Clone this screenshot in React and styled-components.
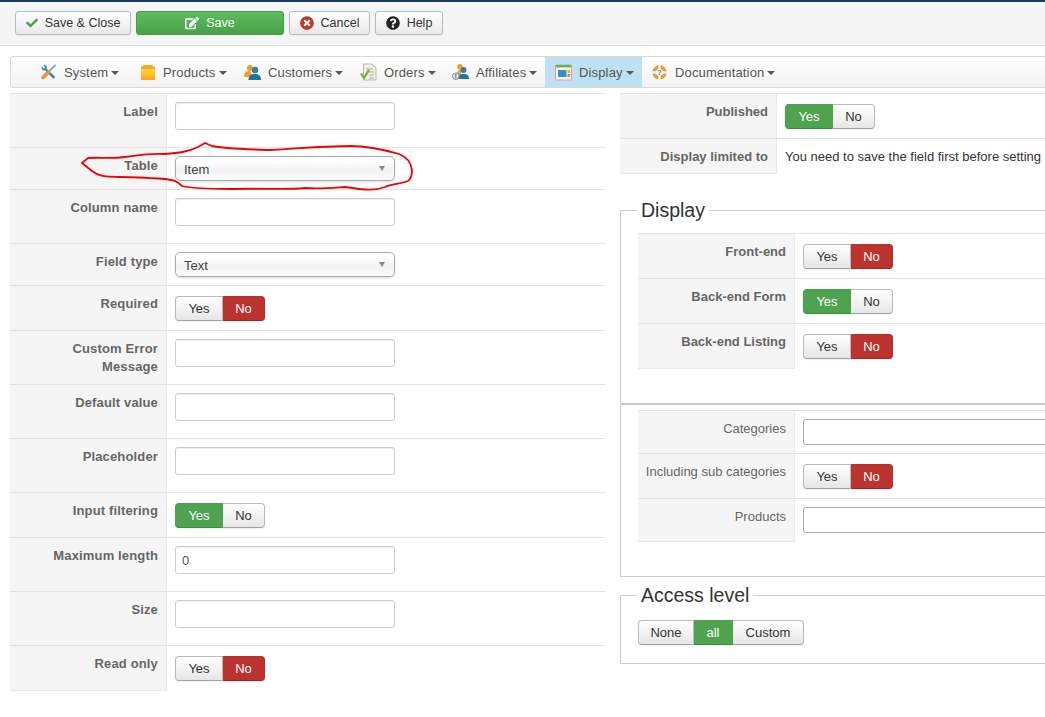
import React from "react";
import styled, { createGlobalStyle, css } from "styled-components";
import { FaCheck, FaEdit, FaTimesCircle, FaQuestionCircle } from "react-icons/fa";

const GlobalStyle = createGlobalStyle`
  html, body {
    margin: 0;
    padding: 0;
    background: #fff;
    overflow: hidden;
  }
  * { box-sizing: border-box; }
`;

const ToolsIcon = () => (
  <svg width="18" height="18" viewBox="0 0 18 18">
    <path d="M2 3.5 L4 5.5 L5.5 4 L3.5 2 C6 0.8 8 3 7 5.5 L15.5 13.5 C16.5 14.8 15 16.5 13.6 15.5 L5.3 7.2 C3 8 0.8 6 2 3.5 Z" fill="#2f87b4" />
    <path d="M16.5 1.5 L9.5 8.5" stroke="#9aa7ad" strokeWidth="2" />
    <path d="M8.5 9.5 L3.2 14.8" stroke="#ec9433" strokeWidth="4" strokeLinecap="round" />
  </svg>
);

const BoxIcon = () => (
  <svg width="16" height="17" viewBox="0 0 16 17">
    <defs>
      <linearGradient id="box" x1="0" y1="0" x2="0" y2="1">
        <stop offset="0" stopColor="#ffd23f" />
        <stop offset="1" stopColor="#fba81c" />
      </linearGradient>
    </defs>
    <path d="M1 3 L4 1 H11 L15 3 V5 H1 Z" fill="#f6a823" />
    <rect x="1" y="5" width="14" height="11" fill="url(#box)" />
  </svg>
);

const UsersIcon = () => (
  <svg width="17" height="17" viewBox="0 0 17 17">
    <circle cx="6" cy="4" r="3" fill="#f59b2b" />
    <path d="M0 12 C0 8 3 7 6 7 L8 11 L6 13 H1 Z" fill="#f59b2b" />
    <circle cx="11" cy="6" r="3.2" fill="#2b7fa8" />
    <path d="M4.5 16 C4.5 11.5 7.5 10 11 10 C14.5 10 17 11.5 17 16 Z" fill="#22729b" />
  </svg>
);

const OrdersIcon = () => (
  <svg width="17" height="18" viewBox="0 0 17 18">
    <path d="M3.5 1 H12 L16 5 V17 H3.5 Z" fill="#f1f1ec" stroke="#b9b9b0" />
    <path d="M6 6 H13 M6 9 H14 M9 12 H14 M9 15 H14" stroke="#a9aea8" />
    <path d="M1 10.5 L4 15 L9 7" fill="none" stroke="#7eb02c" strokeWidth="2.2" />
  </svg>
);

const AffiliatesIcon = () => (
  <svg width="17" height="18" viewBox="0 0 17 18">
    <circle cx="8" cy="3.8" r="2.8" fill="#f5a02e" />
    <path d="M5 13 C4.5 8 6 7 9 7 L9 13 Z" fill="#f5a02e" />
    <circle cx="11.5" cy="7" r="3" fill="#2b7fa8" />
    <path d="M6 16 C6 12 8 11 11.5 11 C15 11 17 12 17 16 Z" fill="#22729b" />
    <circle cx="3.8" cy="13.2" r="3.3" fill="#dfe8ef" stroke="#6c8fb0" />
    <path d="M3.8 11 V15.5" stroke="#4b6f94" />
  </svg>
);

const DisplayIcon = () => (
  <svg width="17" height="17" viewBox="0 0 17 17">
    <rect x="0.5" y="1" width="16" height="15" rx="1" fill="#fbf3ee" stroke="#dca39b" />
    <rect x="0.5" y="1" width="16" height="2.4" fill="#63b54d" />
    <rect x="3" y="6" width="8.5" height="7" fill="#3a8fc4" />
    <rect x="12.5" y="6" width="2.5" height="3" fill="#e5b13a" />
    <rect x="12.5" y="10" width="2.5" height="3" fill="#e2796a" />
  </svg>
);

const DocsIcon = () => (
  <svg width="15" height="15" viewBox="0 0 15 15">
    <circle cx="7.5" cy="7.5" r="5.4" fill="#fff" stroke="#e79a3a" strokeWidth="3.6" />
    <path d="M7.5 0 V4 M7.5 11 V15 M0 7.5 H4 M11 7.5 H15" stroke="#f7f4ee" strokeWidth="2.4" />
    <text x="7.5" y="10.4" textAnchor="middle" fontSize="8" fontWeight="700" fontFamily="Liberation Sans, sans-serif" fill="#3b83b5">?</text>
  </svg>
);

const toolbarButtons = [
  { label: "Save & Close", icon: <FaCheck color="#46a546" size={12} />, width: 116 },
  { label: "Save", icon: <FaEdit color="#fff" size={14} />, width: 148, $green: true },
  { label: "Cancel", icon: <FaTimesCircle color="#bd362f" size={14} />, width: 81 },
  { label: "Help", icon: <FaQuestionCircle color="#222" size={14} />, width: 68 },
];

const menu = [
  { label: "System", icon: <ToolsIcon />, width: 99 },
  { label: "Products", icon: <BoxIcon />, width: 105 },
  { label: "Customers", icon: <UsersIcon />, width: 116 },
  { label: "Orders", icon: <OrdersIcon />, width: 92 },
  { label: "Affiliates", icon: <AffiliatesIcon />, width: 103 },
  { label: "Display", icon: <DisplayIcon />, width: 97, $active: true },
  { label: "Documentation", icon: <DocsIcon />, width: 140, $pad: 9 },
];

const Toggle = ({ on, first = "Yes", second = "No" }) => (
  <Switch>
    <SwitchButton $width={48} $state={on ? "yes" : null}>{first}</SwitchButton>
    <SwitchButton $width={42} $state={on ? null : "no"}>{second}</SwitchButton>
  </Switch>
);

const TextField = ({ value }) => <Input type="text" defaultValue={value} />;

const Dropdown = ({ value }) => (
  <Select>
    {value}
    <SelectArrow />
  </Select>
);

const leftRows = [
  { label: "Label", h: 54, field: <TextField /> },
  { label: "Table", h: 42, field: <Dropdown value="Item" /> },
  { label: "Column name", h: 54, field: <TextField /> },
  { label: "Field type", h: 42, field: <Dropdown value="Text" /> },
  { label: "Required", h: 45, field: <Toggle />, toggle: true },
  { label: "Custom Error Message", h: 54, field: <TextField /> },
  { label: "Default value", h: 54, field: <TextField /> },
  { label: "Placeholder", h: 54, field: <TextField /> },
  { label: "Input filtering", h: 45, field: <Toggle on />, toggle: true },
  { label: "Maximum length", h: 54, field: <TextField value="0" /> },
  { label: "Size", h: 54, field: <TextField /> },
  { label: "Read only", h: 45, field: <Toggle />, toggle: true },
];

const FormRows = ({ rows, plain, spaced }) => (
  <Rows>
    {rows.map((row) => (
      <Row key={row.label} $h={row.h}>
        <RowLabel $plain={plain} $spaced={spaced}>{row.label}</RowLabel>
        <RowField $toggle={row.toggle}>{row.field}</RowField>
      </Row>
    ))}
  </Rows>
);

const App = () => {
  return (
    <Page>
      <GlobalStyle />
      <TopBar>
        {toolbarButtons.map((b) => (
          <ToolButton key={b.label} $width={b.width} $green={b.$green}>
            {b.icon}
            {b.label}
          </ToolButton>
        ))}
      </TopBar>
      <Menu>
        {menu.map((m) => (
          <MenuItem key={m.label} $width={m.width} $active={m.$active} $pad={m.$pad}>
            <MenuIcon>{m.icon}</MenuIcon>
            {m.label}
            <Caret />
          </MenuItem>
        ))}
      </Menu>
      <Columns>
        <LeftColumn>
          <FormRows spaced rows={leftRows} />
        </LeftColumn>
        <RightColumn>
          <FormRows
            rows={[
              { label: "Published", h: 45, field: <Toggle on />, toggle: true },
              {
                label: "Display limited to",
                h: 35,
                field: <Note>You need to save the field first before setting the display rules</Note>,
              },
            ]}
          />
          <Fieldset $mt={25} $pb={35}>
            <Legend>Display</Legend>
            <FormRows
              rows={[
                { label: "Front-end", h: 45, field: <Toggle />, toggle: true },
                { label: "Back-end Form", h: 45, field: <Toggle on />, toggle: true },
                { label: "Back-end Listing", h: 45, field: <Toggle />, toggle: true },
              ]}
            />
            <Divider />
            <FormRows
              plain
              rows={[
                { label: "Categories", h: 43, field: <WideInput type="text" /> },
                { label: "Including sub categories", h: 45, field: <Toggle />, toggle: true },
                { label: "Products", h: 43, field: <WideInput type="text" /> },
              ]}
            />
          </Fieldset>
          <Fieldset $mt={6} $pb={18}>
            <Legend $gap={13}>Access level</Legend>
            <Switch>
              <SwitchButton $width={56}>None</SwitchButton>
              <SwitchButton $width={39} $state="yes">all</SwitchButton>
              <SwitchButton $width={71}>Custom</SwitchButton>
            </Switch>
          </Fieldset>
        </RightColumn>
      </Columns>
      <Scribble viewBox="0 0 1045 717" width="1045" height="717">
        <path
          d="M82 163 L88 158 C100 157 110 159 125 157 C140 155 150 153 165 154 C178 153 188 152 198 147 L205 143 L212 146 C225 149 245 149 270 150 C290 149 305 147 350 146 C370 146 385 150 399 154 C407 157 411 163 412 170 C412 176 411 179 408 181 C400 184 392 184 385 187 C375 191 365 190 345 187 C330 188 320 189 305 188 C285 190 260 188 230 189 C205 189 190 188 182 186 C178 182 175 180 165 179 C150 178 135 177 120 177 C105 177 98 176 92 171 Z"
          fill="none"
          stroke="#f00000"
          strokeWidth="1.8"
        />
      </Scribble>
    </Page>
  );
};

const Page = styled.div`
  position: relative;
  width: 1045px;
  height: 717px;
  overflow: hidden;
  font-family: "Liberation Sans", Arial, sans-serif;
  font-size: 13px;
  color: #333;
`;

const TopBar = styled.div`
  display: flex;
  gap: 5px;
  height: 46px;
  padding: 9px 15px 0;
  background: #f5f5f5;
  border-top: 2px solid #1a3867;
  border-bottom: 1px solid #dcdcdc;
`;

const ToolButton = styled.div`
  display: flex;
  align-items: center;
  justify-content: center;
  gap: 7px;
  width: ${(p) => p.$width}px;
  height: 24px;
  border-radius: 3px;
  font-size: 12.5px;
  box-shadow: 0 1px 1px rgba(0, 0, 0, 0.05);
  ${(p) =>
    p.$green
      ? css`
          color: #fff;
          background: linear-gradient(#5ebd5e, #48a048);
          border: 1px solid #4a9a4a;
        `
      : css`
          color: #333;
          background: linear-gradient(#fff, #e9e9e9);
          border: 1px solid #bcbcbc;
        `}
`;

const Menu = styled.div`
  display: flex;
  height: 32px;
  margin: 10px 0 5px 10px;
  padding-left: 19px;
  border: 1px solid #d8d8d8;
  border-right: none;
  border-radius: 4px 0 0 4px;
  background: linear-gradient(#fff, #f2f2f2);
`;

const MenuItem = styled.div`
  display: flex;
  align-items: center;
  flex: none;
  width: ${(p) => p.$width}px;
  height: 30px;
  padding-left: ${(p) => p.$pad || 10}px;
  color: #555;
  letter-spacing: 0.15px;
  background: ${(p) => (p.$active ? "#bde0f3" : "transparent")};
`;

const MenuIcon = styled.span`
  display: flex;
  justify-content: center;
  align-items: center;
  width: 17px;
  margin-right: 7px;
`;

const Caret = styled.span`
  width: 0;
  height: 0;
  margin-left: 3px;
  margin-top: 1px;
  border-left: 4px solid transparent;
  border-right: 4px solid transparent;
  border-top: 4px solid #555;
`;

const Columns = styled.div`
  display: flex;
  align-items: flex-start;
  padding-left: 10px;
`;

const LeftColumn = styled.div`
  flex: none;
  width: 595px;
`;

const RightColumn = styled.div`
  flex: none;
  width: 640px;
  margin-left: 15px;
`;

const Rows = styled.div`
  display: flex;
  flex-direction: column;
`;

const Row = styled.div`
  display: grid;
  grid-template-columns: 157px 1fr;
  height: ${(p) => p.$h}px;
  border-top: 1px solid #e3e3e3;
`;

const RowLabel = styled.div`
  padding: 9px 8px 0 ${(p) => (p.$plain ? 0 : 20)}px;
  background: #f5f5f5;
  border-right: 1px solid #e9e9e9;
  text-align: right;
  line-height: 18px;
  color: #666;
  font-weight: ${(p) => (p.$plain ? 400 : 700)};
  letter-spacing: ${(p) => (p.$spaced ? 0.15 : 0)}px;
  ${Row}:last-child > & {
    box-shadow: 0 1px 0 #e9e9e9;
  }
`;

const RowField = styled.div`
  padding: ${(p) => (p.$toggle ? "10px" : "8px")} 0 0 8px;
  overflow: hidden;
`;

const Note = styled.div`
  padding-top: 1px;
  line-height: 18px;
  white-space: nowrap;
  color: #333;
`;

const Input = styled.input`
  display: block;
  width: 220px;
  height: 28px;
  padding: 4px 6px;
  border: 1px solid #ccc;
  border-radius: 3px;
  background: #fff;
  box-shadow: inset 0 1px 1px rgba(0, 0, 0, 0.07);
  font: 13px "Liberation Sans", Arial, sans-serif;
  color: #555;
  outline: none;
`;

const WideInput = styled(Input)`
  width: 320px;
  height: 26px;
  border-color: #aaa;
  box-shadow: none;
`;

const Select = styled.div`
  position: relative;
  width: 220px;
  height: 25px;
  padding-left: 8px;
  border: 1px solid #aaa;
  border-radius: 5px;
  background: linear-gradient(#fff 20%, #f1f1f1 60%, #fdfdfd);
  box-shadow: 0 1px 2px rgba(0, 0, 0, 0.15);
  line-height: 25px;
  color: #444;
`;

const SelectArrow = styled.span`
  position: absolute;
  top: 9px;
  right: 9px;
  width: 0;
  height: 0;
  border-left: 3.5px solid transparent;
  border-right: 3.5px solid transparent;
  border-top: 5px solid #888;
`;

const Switch = styled.div`
  display: inline-flex;
  height: 25px;
  border-radius: 4px;
  box-shadow: 0 1px 2px rgba(0, 0, 0, 0.06);
`;

const SwitchButton = styled.div`
  display: flex;
  align-items: center;
  justify-content: center;
  width: ${(p) => p.$width}px;
  border: 1px solid #bbb;
  border-bottom-color: #a2a2a2;
  border-left-width: 0;
  background: linear-gradient(#fff, #e6e6e6);
  color: #333;
  &:first-child {
    border-left-width: 1px;
    border-radius: 4px 0 0 4px;
  }
  &:last-child {
    border-radius: 0 4px 4px 0;
  }
  ${(p) =>
    p.$state === "yes" &&
    css`
      background: #4fa350;
      border-color: #46a546;
      border-bottom-color: #3d8b3d;
      color: #fff;
    `}
  ${(p) =>
    p.$state === "no" &&
    css`
      background: #bb322e;
      border-color: #b52f2b;
      border-bottom-color: #942a25;
      color: #fff;
    `}
`;

const Fieldset = styled.fieldset`
  margin: ${(p) => p.$mt}px 0 0;
  padding: 0 0 ${(p) => p.$pb}px 17px;
  border: 1px solid #ccc;
  border-right: none;
  min-width: 0;
`;

const Legend = styled.legend`
  margin: 0 0 ${(p) => p.$gap || 11}px -1px;
  padding: 0 4px;
  font-size: 19.5px;
  line-height: 24px;
  color: #333;
`;

const Divider = styled.hr`
  height: 2px;
  margin: 35px 0 5px -17px;
  border: none;
  background: #ccc;
`;

const Scribble = styled.svg`
  position: absolute;
  top: 0;
  left: 0;
  pointer-events: none;
`;

export default App;
